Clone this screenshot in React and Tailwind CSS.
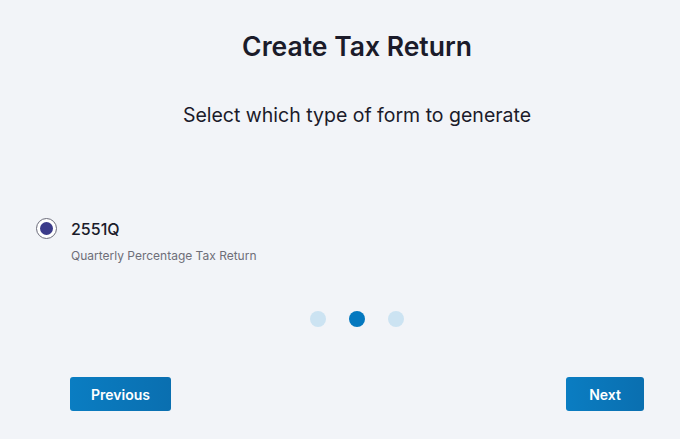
import React, { useState } from 'react';

export default function App() {
    const [selected, setSelected] = useState('2551Q');
    const [step] = useState(1);

    return (
        <div className="w-[680px] h-[439px] bg-[#f2f4f8] font-['Inter','Noto_Sans',sans-serif] text-[#1b1b2a]">
            <div className="ml-[70px] w-[574px] flex flex-col">
                <h1 className="text-center text-[26.5px] font-semibold leading-none mt-[33px]">Create Tax Return</h1>
                <p className="text-center text-[19.5px] leading-none mt-[46px]">Select which type of form to generate</p>

                <div className="mt-[93px] -ml-[34px]">
                    <label className="flex items-center gap-[14px] cursor-pointer" onClick={() => setSelected('2551Q')}>
                        <span className="w-[21px] h-[21px] rounded-full border border-[#6b6b7a] bg-white flex items-center justify-center">
                            {selected === '2551Q' && <span className="w-[13px] h-[13px] rounded-full bg-[#3b3b8a]" />}
                        </span>
                        <span className="text-[16px] font-medium leading-none">2551Q</span>
                    </label>
                    <p className="ml-[35px] mt-[11px] text-[12px] text-[#6e6e78] leading-none">Quarterly Percentage Tax Return</p>
                </div>

                <div className="flex justify-center gap-[23px] mt-[49px]">
                    {[0, 1, 2].map(i => (
                        <span
                            key={i}
                            className={`w-[16px] h-[16px] rounded-full ${i === step ? 'bg-[#0478bf]' : 'bg-[#cce3f2]'}`}
                        />
                    ))}
                </div>

                <div className="flex justify-between mt-[50px]">
                    <button className="w-[101px] h-[34px] rounded-[3px] bg-gradient-to-r from-[#0a7dc2] to-[#0a6fb0] text-white text-[14px] font-semibold">Previous</button>
                    <button className="w-[78px] h-[34px] rounded-[3px] bg-gradient-to-r from-[#0a7dc2] to-[#0a6fb0] text-white text-[14px] font-semibold">Next</button>
                </div>
            </div>
        </div>
    );
}
